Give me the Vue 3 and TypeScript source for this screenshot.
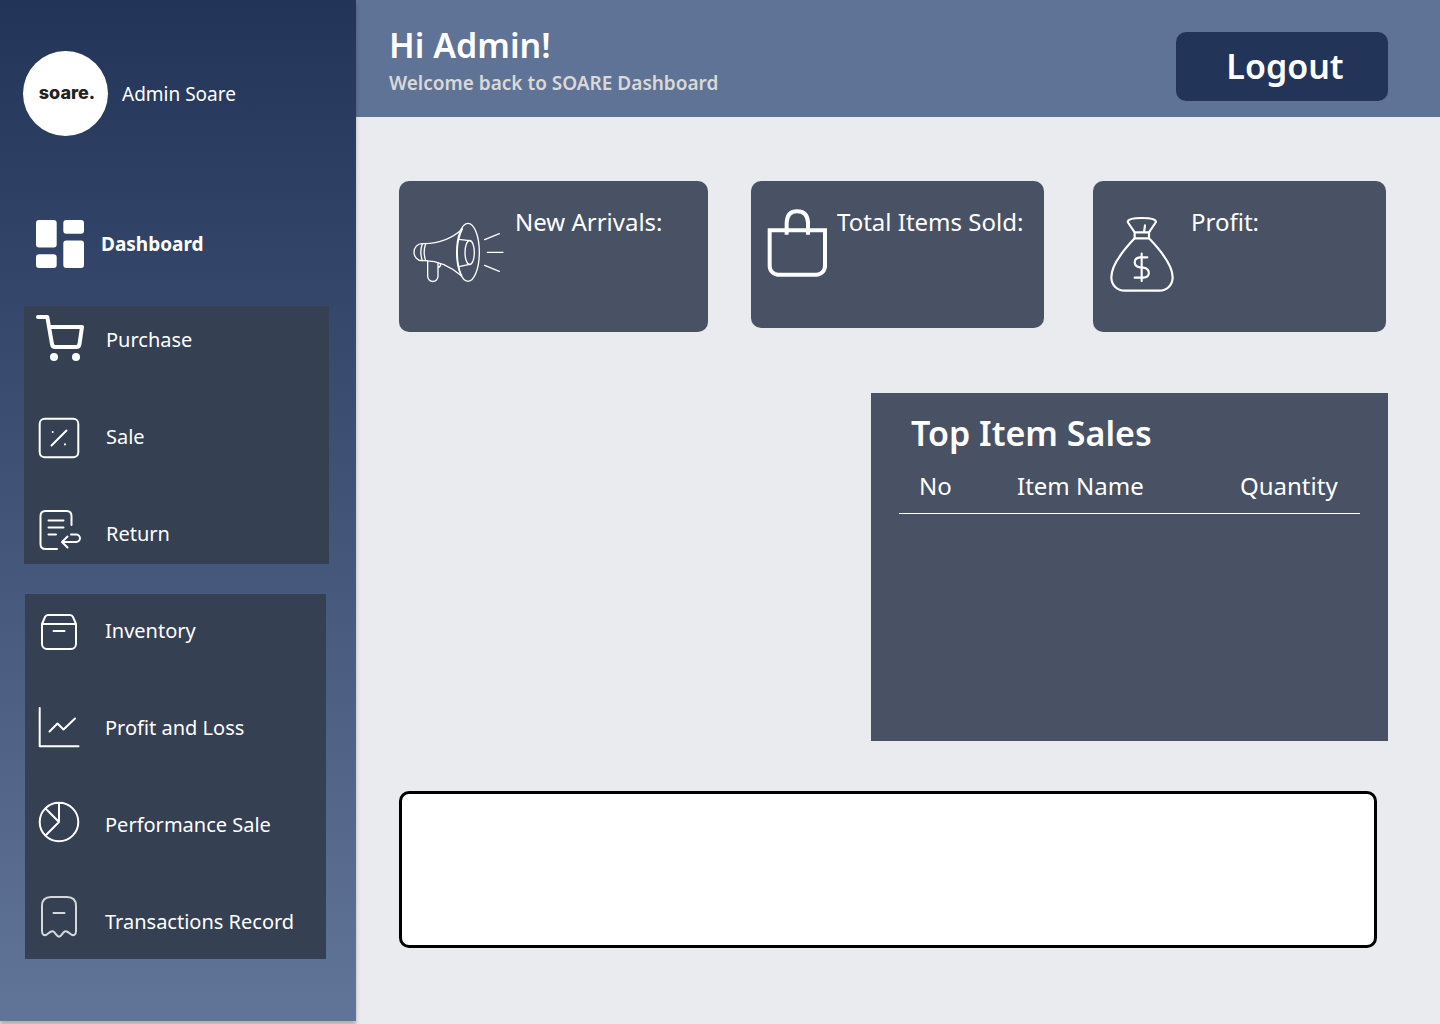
<script setup lang="ts">
interface NavItem {
  label: string
  icon: string
  faint?: boolean
}

const tradeItems: NavItem[] = [
  { label: 'Purchase', icon: 'cart' },
  { label: 'Sale', icon: 'sale' },
  { label: 'Return', icon: 'return' },
]

const reportItems: NavItem[] = [
  { label: 'Inventory', icon: 'inventory' },
  { label: 'Profit and Loss', icon: 'chart' },
  { label: 'Performance Sale', icon: 'pie' },
  { label: 'Transactions Record', icon: 'receipt', faint: true },
]

const outlines: Record<string, string> = {
  sale: 'M8.700 9.700h28.600a5 5 0 0 1 5 5v28.600a5 5 0 0 1-5 5H8.700a5 5 0 0 1-5-5V14.700a5 5 0 0 1 5-5zM15.500 36.500l15-15M16.700 23v.1M29 35.300v.1',
  return: 'M35.500 19v-9c0-3-2-5-5-5h-21c-3 0-5 2-5 5v28c0 3 2 5 5 5H21M12.500 14.500h15M12.500 21.500h15M12.500 28.500H20M35 28.500h5.200a3.700 3.700 0 0 1 0 7.500H26M31.500 30.500L26 36l5.500 5.500',
  inventory: 'M7 21v20a5 5 0 0 0 5 5h24a5 5 0 0 0 5-5V21zM7 21l3-7q1-2 3-2h22q2 0 3 2l3 7M18.500 28h11',
  chart: 'M4.700 8v38.300H43.500M14.500 31.500l8-8 6 6 11.500-11',
  pie: 'M24 5.700a19.300 19.300 0 1 1 0 38.600a19.300 19.300 0 1 1 0-38.600V25L10.500 11.500M24 25L10.500 38.500',
  receipt: 'M7 12v25c0 4 2.500 5 5 3.300 3-2.300 5-4.300 7.500-1.800 1.500 1.500 2.500 4.200 4.500 4.200s3-2.700 4.500-4.200c2.500-2.500 4.500-.5 7.500 1.800 2.500 1.700 5 .7 5-3.300V12c0-6-3-9-9-9H16c-6 0-9 3-9 9zM18.500 19h11',
}
</script>

<template>
  <div class="layout">
    <aside class="sidebar">
      <div class="profile">
        <div class="avatar">soare.</div>
        <span>Admin Soare</span>
      </div>
      <nav>
        <a href="#" class="dashboard-link">
          <svg width="48" height="48" viewBox="0 0 48 48" fill="#fff" aria-hidden="true">
            <rect width="20.700" height="27.500" rx="3" />
            <rect y="34.300" width="20.700" height="13.700" rx="3" />
            <rect x="27.300" width="20.700" height="13.700" rx="3" />
            <rect x="27.300" y="20.500" width="20.700" height="27.500" rx="3" />
          </svg>
          <span>Dashboard</span>
        </a>
        <div class="group trade">
          <a v-for="item in tradeItems" :key="item.label" href="#" class="nav-link">
            <svg v-if="item.icon === 'cart'" class="nav-icon" viewBox="0 0 48 56" aria-hidden="true">
              <path d="M2 5h9.300L16 32c.4 2 1.300 3 3 3h21.500c1.700 0 2.600-1 3-3L46 15H14" stroke-width="4" />
              <circle cx="18" cy="45" r="4" fill="#fff" stroke="none" />
              <circle cx="40" cy="45" r="4" fill="#fff" stroke="none" />
            </svg>
            <svg v-else class="nav-icon" viewBox="0 0 48 56" aria-hidden="true">
              <path :d="outlines[item.icon]" />
            </svg>
            <span>{{ item.label }}</span>
          </a>
        </div>
        <div class="group reports">
          <a v-for="item in reportItems" :key="item.label" href="#" class="nav-link">
            <svg class="nav-icon" :class="{ faint: item.faint }" viewBox="0 0 48 56" aria-hidden="true">
              <path :d="outlines[item.icon]" />
            </svg>
            <span>{{ item.label }}</span>
          </a>
        </div>
      </nav>
    </aside>

    <div class="page">
      <header class="topbar">
        <div>
          <h1>Hi Admin!</h1>
          <p>Welcome back to SOARE Dashboard</p>
        </div>
        <button type="button" class="logout">Logout</button>
      </header>

      <main>
        <section class="cards">
          <article class="card arrivals">
            <svg width="96" height="130" viewBox="63 33 288 390" stroke-width="4" aria-hidden="true">
              <path d="M217 177Q170 220 104 221H96A24 25.500 0 0 0 96 272H106Q160 272 215 318" />
              <path d="M97 221Q88 246 97 272M107 221Q98 246 107 272" />
              <ellipse cx="234" cy="247" rx="34" ry="87" />
              <path d="M217 177Q204 205 202 235Q200 285 215 318" />
              <path d="M206 208L239 212M206 290L239 283" />
              <ellipse cx="239" cy="247.500" rx="14" ry="36" />
              <path d="M113 273V319a15 15 0 0 0 31 0V278M144 293Q152 291 152 281" />
              <path d="M284 209L328 191M292 247H339M284 286L328 304" />
            </svg>
            <h2>New Arrivals:</h2>
          </article>
          <article class="card sold">
            <svg width="63" height="130" viewBox="78 33 189 390" stroke-width="12" aria-hidden="true">
              <path d="M89 181H255V288a26 26 0 0 1-26 26H115a26 26 0 0 1-26-26Z" stroke-linejoin="miter" />
              <path d="M140 194V157Q142 124 171 124Q202 124 204 157V194" stroke-linecap="butt" />
            </svg>
            <h2>Total Items Sold:</h2>
          </article>
          <article class="card profit">
            <svg width="68" height="130" viewBox="84 33 204 390" stroke-width="6.500" aria-hidden="true">
              <path d="M164 187L143 156Q143 144 186 144Q228 144 228 156L207 187" />
              <path d="M164 187H207V205H164ZM195 166L192 187" />
              <path d="M164 205C140 230 94 282 94 322C94 346 112 362 134 362H238C260 362 278 346 278 322C278 282 231 230 207 205" />
              <path d="M202 262H180C159 264 159 289 180 292L190 293C212 297 212 321 190 323H164M185 251V333" />
            </svg>
            <h2>Profit:</h2>
          </article>
        </section>

        <section class="top-sales">
          <h2 id="top-sales-title">Top Item Sales</h2>
          <table aria-labelledby="top-sales-title">
            <thead>
              <tr>
                <th class="col-no" scope="col">No</th>
                <th scope="col">Item Name</th>
                <th class="col-quantity" scope="col">Quantity</th>
              </tr>
            </thead>
          </table>
        </section>

        <section class="notes"></section>
      </main>
    </div>
  </div>
</template>

<style>
body {
  margin: 0;
  background: #eaebef;
}
</style>

<style scoped>
.layout {
  display: flex;
  align-items: flex-start;
  min-height: 100vh;
  overflow: hidden;
  font: 400 20px/28px "Noto Sans", sans-serif;
  color: #fff;
}

h1,
h2,
p {
  margin: 0;
}

a {
  color: inherit;
  text-decoration: none;
}

svg {
  flex: none;
}

.sidebar {
  position: relative;
  box-sizing: border-box;
  flex: 0 0 356px;
  min-height: calc(100vh - 3px);
  padding: 51px 0 62px;
  background: linear-gradient(#223457, #617599);
  box-shadow: 0 4px 4px rgba(0, 0, 0, 0.25);
}

.profile {
  display: flex;
  align-items: center;
  gap: 14px;
  margin-left: 23px;
  font-size: 19px;
}

.avatar {
  display: flex;
  align-items: center;
  justify-content: center;
  width: 85px;
  height: 85px;
  padding: 0 0 2px 3px;
  box-sizing: border-box;
  border-radius: 50%;
  background: #fff;
  color: #222;
  font: 800 18px/28px Inter, sans-serif;
}

.dashboard-link {
  display: flex;
  align-items: center;
  gap: 17px;
  margin: 84px 0 38px 36px;
  font-size: 19px;
  font-weight: 700;
}

.group {
  display: flex;
  flex-direction: column;
  gap: 69px;
  background: #354053;
}

.trade {
  margin: 0 27px 30px 24px;
  padding: 20px 12px 16px;
}

.reports {
  margin: 0 30px 0 25px;
  padding: 23px 10px;
}

.nav-link {
  display: flex;
  align-items: center;
  gap: 22px;
  height: 28px;
}

.nav-icon {
  width: 48px;
  height: 56px;
  fill: none;
  stroke: #fff;
  stroke-width: 2;
  stroke-linecap: round;
  stroke-linejoin: round;
}

.faint {
  stroke: #d5d8dd;
}

.page {
  flex: 1;
  min-width: 0;
}

.topbar {
  display: flex;
  justify-content: space-between;
  align-items: flex-start;
  box-sizing: border-box;
  min-height: 117px;
  padding: 21px 52px 16px 33px;
  background: #5f7396;
}

h1 {
  font-size: 34px;
  line-height: 48px;
  font-weight: 600;
}

.topbar p {
  color: #d9d9d9;
  font-size: 19px;
  font-weight: 600;
}

.logout {
  width: 212px;
  height: 69px;
  margin-top: 11px;
  padding: 0 0 2px 6px;
  border: 0;
  border-radius: 10px;
  background: #223457;
  color: #fff;
  font: 600 34px/48px "Noto Sans", sans-serif;
}

main {
  display: flex;
  flex-direction: column;
  padding: 64px 52px 76px 43px;
}

.cards {
  display: flex;
  align-items: flex-start;
  margin: 0 2px 61px 0;
}

.card {
  display: flex;
  align-items: flex-start;
  box-sizing: border-box;
  flex: 1 1 293px;
  min-height: 151px;
  border-radius: 10px;
  background: #485264;
}

.card svg {
  fill: none;
  stroke: #fff;
  stroke-linecap: round;
  stroke-linejoin: round;
}

.card h2 {
  padding-top: 25px;
  font-size: 24px;
  line-height: 32px;
  font-weight: 400;
  white-space: nowrap;
}

.arrivals {
  flex-basis: 309px;
  gap: 8px;
  padding-left: 12px;
}

.sold {
  gap: 8px;
  min-height: 147px;
  margin: 0 49px 0 43px;
  padding-left: 15px;
}

.profit {
  gap: 15px;
  padding-left: 15px;
}

.top-sales {
  align-self: flex-end;
  box-sizing: border-box;
  width: calc(100% - 472px);
  min-height: 348px;
  padding: 16px 28px 28px;
  background: #485264;
}

.top-sales h2 {
  margin: 0 0 13px 12px;
  font-size: 34px;
  line-height: 48px;
  font-weight: 600;
}

table {
  width: 100%;
  table-layout: fixed;
  border-collapse: collapse;
}

th {
  padding: 0 0 11px 20px;
  border-bottom: 1px solid #fff;
  font-size: 24px;
  line-height: 32px;
  font-weight: 400;
  text-align: left;
}

.col-no {
  width: 78px;
}

.col-quantity {
  width: 120px;
}

.notes {
  box-sizing: border-box;
  min-height: 157px;
  margin: 50px 11px 0 0;
  border: 3px solid #000;
  border-radius: 10px;
  background: #fff;
}
</style>
